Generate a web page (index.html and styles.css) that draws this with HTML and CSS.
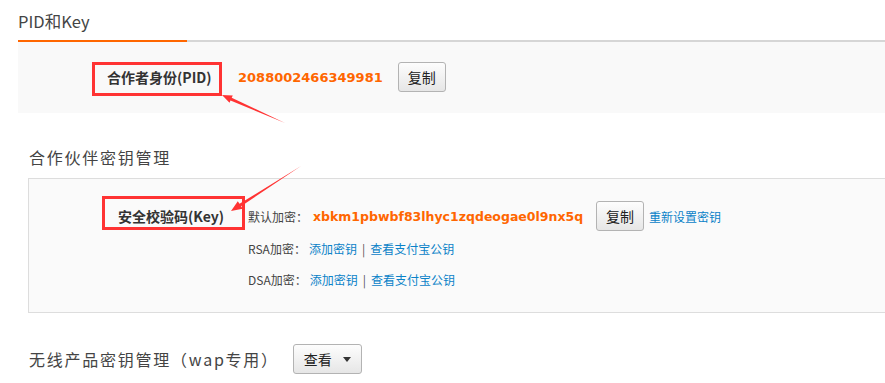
FILE: index.html
```html
<html>
  <head>
    <link rel="stylesheet" href="styles.css">
    <title>PID和Key</title>
  </head>
  <body>
    <div class="page">
      <div class="tabbar">
        <span class="tab">PID和Key</span>
      </div>

      <div class="panel panel-pid">
        <div class="field">
          <span class="field-label">合作者身份(PID)</span>
          <div class="field-body">
            <div class="line">
              <span class="secret">2088002466349981</span>
              <button class="btn">复制</button>
            </div>
          </div>
        </div>
      </div>

      <h3 class="section-title">合作伙伴密钥管理</h3>

      <div class="panel panel-key">
        <div class="field">
          <span class="field-label">安全校验码(Key)</span>
          <div class="field-body">
            <div class="line">
              <span class="kind">默认加密：</span>
              <span class="secret">xbkm1pbwbf83lhyc1zqdeogae0l9nx5q</span>
              <button class="btn">复制</button>
              <a class="link reset" href="#">重新设置密钥</a>
            </div>
            <div class="line small">
              <span class="kind">RSA加密：</span>
              <a class="link" href="#">添加密钥</a><span class="sep">|</span><a class="link" href="#">查看支付宝公钥</a>
            </div>
            <div class="line small last">
              <span class="kind">DSA加密：</span>
              <a class="link" href="#">添加密钥</a><span class="sep">|</span><a class="link" href="#">查看支付宝公钥</a>
            </div>
          </div>
        </div>
      </div>

      <div class="wap-row">
        <h3 class="section-title">无线产品密钥管理（wap专用）</h3>
        <button class="btn btn-drop">查看<i class="caret"></i></button>
      </div>

      <!-- annotation layer -->
      <svg class="marks" width="885" height="383" viewBox="0 0 885 383">
        <rect x="93.5" y="63.5" width="127" height="31" fill="none" stroke="#f33" stroke-width="3"/>
        <rect x="103.5" y="197.5" width="140" height="31" fill="none" stroke="#f33" stroke-width="3"/>
        <polygon fill="#f33" points="222,95 232.8,95.5 231.7,97.7 285,123 230.5,100.5 229.5,102.8"/>
        <polygon fill="#f33" points="231,211 242.7,208.8 241.1,206.3 301,166 239.5,203.8 237.8,201.3"/>
      </svg>
    </div>
  </body>
</html>
```

FILE: styles.css
```css
body {
  margin: 0;
  font-family: "Noto Sans CJK SC", "DejaVu Sans", sans-serif;
  color: #333;
  background: #fff;
}

.page {
  position: relative;
  width: 885px;
  height: 383px;
  overflow: hidden;
}

.tabbar {
  margin-left: 18px;
  border-bottom: 2px solid #d6d6d6;
  height: 40px;
}
.tab {
  display: inline-block;
  width: 169px;
  height: 36px;
  padding-top: 4px;
  line-height: 34px;
  font-size: 16.5px;
  color: #444;
  border-bottom: 2px solid #f60;
}

.panel {
  background: #f9f9f9;
}
.panel-pid {
  margin-left: 18px;
  padding: 20px 0 21px 89px;
}
.panel-key {
  margin-left: 28px;
  border: 1px solid #ddd;
  border-right: none;
  background: #fafafa;
  padding: 22px 0 23px 89px;
}

.field {
  display: flex;
  align-items: flex-start;
}
.field-label {
  width: 131px;
  flex-shrink: 0;
  line-height: 30px;
  font-size: 14px;
  font-weight: bold;
  color: #333;
}
.panel-key .field-label {
  width: 130px;
}

.line {
  display: flex;
  align-items: center;
  height: 30px;
}
.line.small {
  height: 20px;
  margin-top: 7px;
  font-size: 12px;
}
.line.last {
  margin-top: 11px;
}

.kind {
  font-size: 12px;
  color: #444;
  margin-right: 5px;
}
.line.small .kind {
  margin-right: 3px;
}

.secret {
  font-family: "DejaVu Sans", sans-serif;
  font-weight: bold;
  font-size: 13px;
  color: #f60;
  margin-right: 15px;
}
.panel-key .secret {
  font-size: 12.5px;
  margin-right: 13px;
}

.link {
  color: #0a82c8;
  text-decoration: none;
  font-size: 12px;
}
.reset {
  margin-left: 5px;
}
.sep {
  color: #555;
  margin: 0 5px;
  font-size: 12px;
}

.btn {
  height: 30px;
  padding: 0 9px;
  border: 1px solid #b3b3b3;
  border-radius: 3px;
  background: linear-gradient(#fdfdfd, #e6e6e6);
  font-family: "Noto Sans CJK SC", sans-serif;
  font-size: 14px;
  color: #222;
  display: inline-flex;
  align-items: center;
}

.section-title {
  margin: 32px 0 9px 29px;
  font-size: 16px;
  line-height: 24px;
  font-weight: normal;
  letter-spacing: 1.75px;
  color: #444;
}

.wap-row {
  display: flex;
  align-items: center;
  gap: 14px;
  margin-top: 31px;
  padding-left: 29px;
}
.wap-row .section-title {
  margin: 0;
}
.btn-drop {
  padding: 0 10px 0 10px;
}
.caret {
  display: inline-block;
  margin-left: 11px;
  width: 0;
  height: 0;
  border-left: 4.5px solid transparent;
  border-right: 4.5px solid transparent;
  border-top: 5px solid #333;
}

.marks {
  position: absolute;
  top: 0;
  left: 0;
  pointer-events: none;
}
```
